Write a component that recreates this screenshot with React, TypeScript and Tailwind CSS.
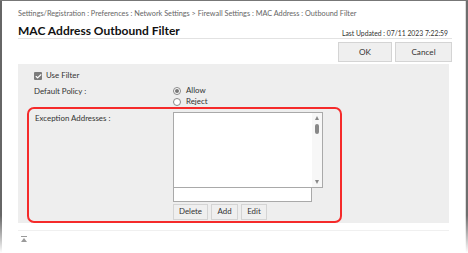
import { Check } from 'lucide-react';

function GrayButton({ label, className = '' }: { label: string; className?: string }) {
  return (
    <button
      className={`flex items-center justify-center border border-[#d4d4d4] bg-[#efefef] text-[#333] ${className}`}
    >
      {label}
    </button>
  );
}

function Radio({ checked, label }: { checked?: boolean; label: string }) {
  return (
    <label className="flex h-[11px] items-center gap-[5px]">
      <span className="flex h-[8px] w-[8px] items-center justify-center rounded-full border border-[#888] bg-white">
        {checked && <span className="h-[4px] w-[4px] rounded-full bg-[#777]" />}
      </span>
      <span>{label}</span>
    </label>
  );
}

export default function App() {
  return (
    <div className="flex h-[253px] w-[468px] overflow-hidden border-t border-[#777] bg-white font-['Lato',sans-serif] text-[7.9px] text-[#333]">
      {/* left frame edge */}
      <div className="w-[2px] shrink-0 bg-gradient-to-b from-[#666] from-85% to-white" />

      <div className="flex min-w-0 flex-1 flex-col pl-[16px] pr-[13px]">
        {/* Breadcrumb */}
        <div className="mt-[8px] h-[10px] whitespace-nowrap text-[7.3px] leading-[10px] text-[#666]">
          Settings/Registration : Preferences : Network Settings &gt; Firewall Settings : MAC Address : Outbound Filter
        </div>

        {/* Title row */}
        <div className="mt-[5px] flex h-[15px] items-center justify-between border-b border-[#e2e2e2]">
          <h1 className="text-[12px] font-bold leading-[14px] text-[#111]">MAC Address Outbound Filter</h1>
          <span className="mr-[4px] mt-[3px] text-[6.8px] leading-[10px] text-[#333]">Last Updated : 07/11 2023 7:22:59</span>
        </div>

        {/* OK / Cancel */}
        <div className="mt-[3px] flex justify-end gap-[3px] text-[8.2px]">
          <GrayButton label="OK" className="h-[20px] w-[54px]" />
          <GrayButton label="Cancel" className="h-[20px] w-[57px]" />
        </div>

        {/* Settings panel */}
        <div className="mr-[3px] mt-[2px] flex h-[159px] flex-col bg-[#eeeeee]">
          <div className="ml-[16px] mt-[7px] flex h-[10px] items-center gap-[4px]">
            <span className="flex h-[8px] w-[8px] items-center justify-center rounded-[1px] bg-[#7c7c7c]">
              <Check className="h-[7px] w-[7px] text-white" strokeWidth={4} />
            </span>
            <span>Use Filter</span>
          </div>

          <div className="mt-[4px] flex">
            <div className="ml-[16px] mt-[1px] h-[11px] w-[139px] leading-[11px]">Default Policy :</div>
            <div className="flex flex-col">
              <Radio checked label="Allow" />
              <Radio label="Reject" />
            </div>
          </div>

          {/* Highlighted exception area */}
          <div className="ml-[9px] flex h-[117px] w-[315px] rounded-[7px] border-2 border-[#f52a2a]">
            <div className="w-[144px] shrink-0 pl-[6px] pt-[4px] leading-[11px]">Exception Addresses :</div>
            <div className="flex flex-col pt-[3px]">
              <div className="flex h-[76px] w-[150px] border border-[#a9a9a9] bg-white">
                <div className="flex-1" />
                <div className="flex w-[10px] flex-col items-center justify-between bg-[#f7f7f7] py-[3px]">
                  <div className="flex flex-col items-center gap-[4px]">
                    <span className="h-0 w-0 border-x-[2.5px] border-b-[4px] border-x-transparent border-b-[#888]" />
                    <span className="h-[10px] w-[4px] rounded-full bg-[#888]" />
                  </div>
                  <span className="h-0 w-0 border-x-[2.5px] border-t-[4px] border-x-transparent border-t-[#888]" />
                </div>
              </div>
              <div className="-mt-px h-[15px] w-[139px] border border-[#a9a9a9] bg-white" />
              <div className="mt-[2px] flex gap-[3px]">
                <GrayButton label="Delete" className="h-[16px] w-[35px]" />
                <GrayButton label="Add" className="h-[16px] w-[27px]" />
                <GrayButton label="Edit" className="h-[16px] w-[26px]" />
              </div>
            </div>
          </div>
        </div>

        {/* Footer */}
        <div className="mr-[3px] mt-[7px] border-b border-[#f0f0f0]" />
        <div className="ml-[3px] mt-[5px] flex flex-col items-center self-start">
          <span className="h-[1px] w-[6px] bg-[#9a9a9a]" />
          <span className="mt-[1px] h-0 w-0 border-x-[3px] border-b-[4px] border-x-transparent border-b-[#9a9a9a]" />
        </div>
      </div>

      {/* right frame edge */}
      <div className="flex shrink-0">
        <div className="w-[1px] bg-gradient-to-b from-[#dcdcdc] from-85% to-white" />
        <div className="w-[2px] bg-gradient-to-b from-[#6e6e6e] from-85% to-white" />
      </div>
    </div>
  );
}
